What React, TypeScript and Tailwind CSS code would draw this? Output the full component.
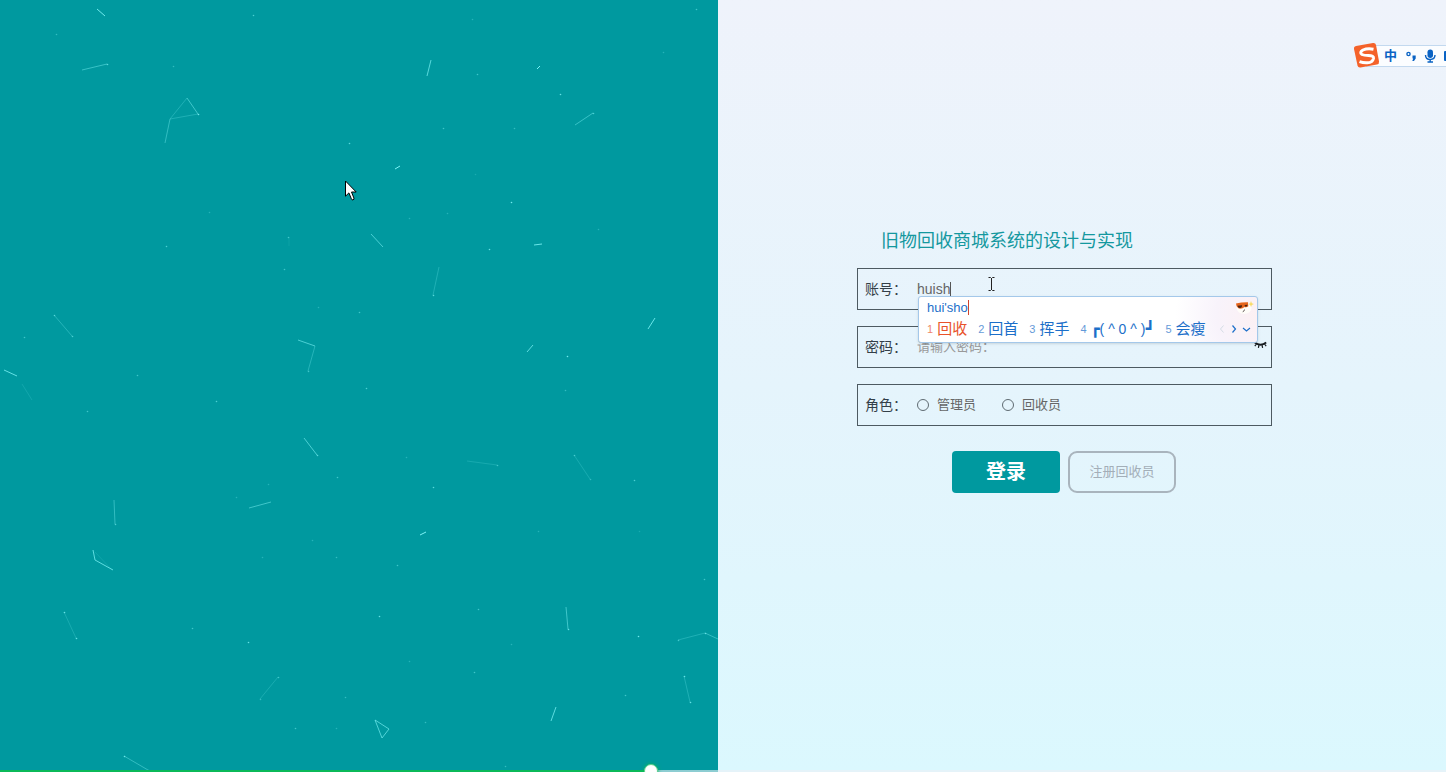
import React, { useState } from "react";

interface LinkLine {
  points: string;
  opacity: number;
}

interface Candidate {
  index: number;
  word: React.ReactNode;
}

const lines: LinkLine[] = [
  { points: "97,9 105,16", opacity: 0.9 },
  { points: "82,70 107,64", opacity: 0.45 },
  { points: "187,98 198,114", opacity: 0.5 },
  { points: "198,114 170,119 187,98", opacity: 0.25 },
  { points: "170,119 165,143", opacity: 0.4 },
  { points: "54,315 72,336", opacity: 0.3 },
  { points: "4,370 17,376", opacity: 0.8 },
  { points: "298,340 315,346", opacity: 0.6 },
  { points: "315,346 308,371", opacity: 0.3 },
  { points: "289,237 289,246", opacity: 0.1 },
  { points: "431,60 427,76", opacity: 0.7 },
  { points: "537,69 540,66", opacity: 1 },
  { points: "575,125 593,113", opacity: 0.45 },
  { points: "395,169 400,166", opacity: 1 },
  { points: "371,234 383,247", opacity: 0.6 },
  { points: "534,245 542,244", opacity: 0.85 },
  { points: "439,267 433,295", opacity: 0.25 },
  { points: "655,318 648,329", opacity: 0.85 },
  { points: "533,345 527,352", opacity: 0.75 },
  { points: "22,384 32,400", opacity: 0.15 },
  { points: "304,438 317,455", opacity: 0.6 },
  { points: "249,508 271,502", opacity: 0.5 },
  { points: "114,500 115,524", opacity: 0.4 },
  { points: "93,550 95,560 113,570", opacity: 0.75 },
  { points: "95,552 112,570", opacity: 0.12 },
  { points: "64,612 76,638", opacity: 0.2 },
  { points: "278,677 260,699", opacity: 0.2 },
  { points: "124,756 148,770", opacity: 0.4 },
  { points: "467,461 497,465", opacity: 0.18 },
  { points: "574,455 590,479", opacity: 0.2 },
  { points: "420,535 426,532", opacity: 1 },
  { points: "566,607 568,629", opacity: 0.5 },
  { points: "678,640 705,633", opacity: 0.25 },
  { points: "705,633 718,639", opacity: 0.4 },
  { points: "684,676 690,702", opacity: 0.25 },
  { points: "375,720 389,729 382,738 375,720", opacity: 0.65 },
  { points: "556,707 551,721", opacity: 0.75 },
];

// x, y, opacity
const dots: [number, number, number][] = [
  [56, 34, 0.4], [253, 15, 0.6], [173, 66, 0.4], [349, 143, 0.7], [166, 246, 0.6],
  [209, 212, 0.3], [288, 237, 0.5], [284, 269, 0.5], [24, 337, 0.5], [137, 375, 0.5],
  [318, 307, 0.3], [359, 312, 0.5], [107, 64, 0.7], [198, 114, 0.9], [472, 19, 0.3],
  [696, 9, 0.5], [663, 52, 0.3], [477, 74, 0.5], [560, 94, 0.8], [593, 113, 0.6],
  [443, 128, 0.5], [514, 128, 0.4], [475, 174, 0.2], [511, 202, 0.9], [489, 249, 0.8],
  [447, 213, 0.3], [409, 218, 0.3], [598, 229, 0.3], [433, 295, 0.7], [567, 356, 0.9],
  [366, 388, 0.6], [565, 390, 0.4], [216, 401, 0.6], [87, 411, 0.5], [72, 336, 0.6],
  [54, 315, 0.6], [308, 371, 0.5], [317, 455, 0.7], [337, 477, 0.5], [268, 484, 0.3],
  [236, 497, 0.3], [115, 524, 0.6], [336, 557, 0.4], [312, 540, 0.3], [262, 557, 0.3],
  [64, 612, 0.8], [76, 638, 0.8], [192, 628, 0.5], [248, 642, 0.8], [278, 677, 0.5],
  [260, 699, 0.4], [345, 697, 0.4], [295, 728, 0.5], [336, 728, 0.3], [124, 756, 0.8],
  [148, 770, 0.8], [406, 457, 0.3], [433, 487, 0.7], [397, 565, 0.5], [497, 465, 0.5],
  [574, 455, 0.5], [590, 479, 0.4], [634, 480, 0.6], [538, 531, 0.3], [639, 531, 0.2],
  [478, 609, 0.5], [379, 616, 0.8], [511, 644, 0.3], [474, 672, 0.5], [568, 629, 0.8],
  [638, 636, 0.9], [704, 579, 0.5], [705, 633, 0.7], [678, 640, 0.5], [684, 676, 0.8],
  [690, 702, 0.8], [625, 695, 0.5], [425, 722, 0.4], [505, 766, 0.4], [409, 661, 0.3],
];

const Emoticon = () => (
  <span className="flex">
    <span className="font-['DejaVu_Sans_Mono',monospace]">┏</span>
    <span className="text-[14px]">( ^ 0 ^ )</span>
    <span className="font-['DejaVu_Sans_Mono',monospace]">┛</span>
  </span>
);

const candidates: Candidate[] = [
  { index: 1, word: "回收" },
  { index: 2, word: "回首" },
  { index: 3, word: "挥手" },
  { index: 4, word: <Emoticon /> },
  { index: 5, word: "会瘦" },
];

const roles = ["管理员", "回收员"];

const ParticleField = () => (
  <svg className="absolute inset-0 h-full w-full" fill="none" stroke="#7df3f6" aria-hidden="true">
    {lines.map((line) => (
      <polyline key={line.points} points={line.points} strokeOpacity={line.opacity} />
    ))}
    {dots.map(([x, y, opacity]) => (
      <circle key={`${x}-${y}`} cx={x + 0.5} cy={y + 0.5} r="0.8" fill="#7df3f6" fillOpacity={opacity} stroke="none" />
    ))}
  </svg>
);

const MousePointer = () => (
  <svg className="absolute left-[345px] top-[180px]" width="12" height="21" viewBox="0 0 12 21" aria-hidden="true">
    <path
      d="M.5 1v15.2l3.4-3.3 2.5 6q.4 1.3 1.6 1 1.5-.5.9-1.9L6.5 12h4.7z"
      fill="#fff"
      stroke="#000"
    />
  </svg>
);

const ClosedEye = () => (
  <svg width="13" height="8" viewBox="0 0 13 8" fill="none" stroke="#171b1f" aria-hidden="true">
    <path d="M.8 1.5Q6.500 6 12.200 1.500" strokeWidth="1.8" />
    <path d="M2.500 3 .8 5.200M5 4l-.6 2.800M8 4l.6 2.800M10.500 3l1.700 2.200" strokeWidth="1.200" />
  </svg>
);

const Mascot = () => (
  <svg width="20" height="16" viewBox="0 0 20 16" aria-hidden="true">
    <ellipse cx="10" cy="9" rx="7.5" ry="6" fill="#fffdf9" />
    <path d="M2 4.500Q8 3 14 3.200l.3 4Q12.500 9 10.500 8 9 9.800 6 9.800 2.500 9 2 4.500z" fill="#e5641c" />
    <path d="M3.500 6.800 8 6.300q.2 2.700-2 2.700-2 0-2.500-2.200zM10.500 6l3-.2q0 1.700-1.500 1.900-1.200 0-1.500-1.700z" fill="#4a2415" />
    <path d="M10.500 10.500q-.2 2-1.800 2.300" fill="none" stroke="#5b5350" strokeWidth=".9" />
    <path d="m17 2 .8 2.200L20 5l-2.200.9L17 8l-.8-2.100L14.500 5l1.700-.8z" fill="#f8dc68" />
  </svg>
);

const InputMethodPanel = () => (
  <div className="absolute left-[60px] top-[27px] z-10 flex h-[47px] w-[340px] flex-col rounded-[3px] border border-[#a4c8ea] bg-white bg-[radial-gradient(circle_at_100%_40%,#fcf0f3_0%,#f8f3fb_12%,#ffffff_24%)] pl-2 pr-[3px] text-[#1c6fc9] shadow-sm">
    <div className="flex h-[20px] items-center justify-between">
      <span className="border-r border-[#d0442e] text-[13px] leading-[15px]">hui'sho</span>
      <Mascot />
    </div>
    <div className="flex h-[24px] items-center">
      <ol className="flex items-center gap-[11px] whitespace-nowrap">
        {candidates.map(({ index, word }) => (
          <li key={index} className={`flex items-center gap-1 ${index === 1 ? "text-[#e8532b]" : ""}`}>
            <span className="text-[11px] opacity-70">{index}</span>
            <span className="text-[15px] leading-[20px]">{word}</span>
          </li>
        ))}
      </ol>
      <div className="ml-auto flex items-center gap-1 pr-[3px]">
        <button type="button" aria-label="上一页" className="text-[#d5dce5]">
          <svg width="8" height="8" viewBox="0 0 8 8" fill="none" stroke="currentColor"><path d="M5.500.5 2.500 4l3 3.500" /></svg>
        </button>
        <button type="button" aria-label="下一页">
          <svg width="8" height="8" viewBox="0 0 8 8" fill="none" stroke="currentColor"><path d="m2.500.5 3 3.500-3 3.500" strokeWidth="1.200" /></svg>
        </button>
        <button type="button" aria-label="展开">
          <svg width="9" height="8" viewBox="0 0 9 8" fill="none" stroke="currentColor"><path d="M1 3l3.500 3L8 3" strokeWidth="1.200" /></svg>
        </button>
      </div>
    </div>
  </div>
);

const InputMethodBar = () => (
  <div className="absolute right-0 top-[42px] flex h-[27px] w-[93px] items-center overflow-hidden">
    <div className="ml-[13px] flex h-[22px] flex-1 items-center border-y border-[#c3d9ef] bg-[#fbfdff] pl-[18px] text-[#0a63c4]">
      <span className="text-[13px] font-bold leading-[20px]">中</span>
      <svg className="ml-2 shrink-0" width="12" height="12" viewBox="0 0 12 12" aria-hidden="true">
        <circle cx="3.5" cy="4" r="1.600" fill="none" stroke="currentColor" strokeWidth="1.400" />
        <path d="M7.500 5.500h3.200v3L9 11H7.300l.9-2.500h-.7z" fill="currentColor" />
      </svg>
      <svg className="ml-[7px] shrink-0" width="12" height="14" viewBox="0 0 12 14" aria-hidden="true">
        <rect x="3.500" y="0.500" width="5.500" height="8.500" rx="2.700" fill="currentColor" />
        <path d="M1.500 6q0 4.500 4.700 4.500T11 6M6.200 10.500V13M3.500 13H9" fill="none" stroke="currentColor" strokeWidth="1.400" />
      </svg>
      <svg className="ml-2 shrink-0" width="14" height="12" viewBox="0 0 14 12" aria-hidden="true">
        <rect x="0" y="1" width="14" height="10" rx="1" fill="currentColor" />
      </svg>
    </div>
    <svg className="absolute left-0 top-0" width="28" height="27" viewBox="0 0 28 27" aria-hidden="true">
      <path d="M3 4 20 1q2.500-.3 3 2l3 16.500q.3 2.500-2 3L7.500 25.500q-2.500.3-3-2L1 7Q.6 4.500 3 4z" fill="#f4622a" />
      <path
        d="M20.500 7.200Q14.500 6 10 8 6 10.500 9 12.500q2 1 6.500 1 5.500 0 5 3-1 4-6 4.300-4 .3-8-1.100"
        fill="none"
        stroke="#fff"
        strokeWidth="3"
      />
    </svg>
  </div>
);

export default function App() {
  const [account, setAccount] = useState("huish");
  const [password, setPassword] = useState("");
  const [role, setRole] = useState("");
  const [progress, setProgress] = useState(45);

  return (
    <main className="relative flex min-h-screen overflow-hidden font-['Liberation_Sans','Noto_Sans_CJK_SC',sans-serif]">
      {/* Particle side */}
      <section className="relative w-[calc(50%-5px)] overflow-hidden bg-[#00999f]">
        <ParticleField />
        <MousePointer />
      </section>

      {/* Login side */}
      <section className="flex-1 bg-linear-to-b from-[#eff3fb] via-[#e5f4fc] to-[#dbf8fe] pl-[139px] pt-[227px]">
        <form className="w-[415px]" onSubmit={(e) => e.preventDefault()}>
          <h1 className="pl-6 text-[18px] leading-[28px] text-[#14989f]">旧物回收商城系统的设计与实现</h1>

          <div className="mt-[13px] flex flex-col gap-4 text-[14px] text-[#333f48]">
            <div className="relative flex h-[42px] items-center border border-[#4d5a61] px-[7px]">
              <label htmlFor="account" className="w-[52px] shrink-0">账号：</label>
              <input
                id="account"
                value={account}
                onChange={(e) => setAccount(e.target.value)}
                className="h-[15px] w-[34px] border-r border-[#555] bg-transparent text-[14px] leading-[15px] text-[#666] outline-none"
              />
              {/* Text caret pointer */}
              <svg className="absolute left-[130px] top-[8px]" width="7" height="14" viewBox="0 0 7 14" fill="none" stroke="#222" aria-hidden="true">
                <path d="M.5.5h2l1 1 1-1h2M3.500 1v12M.5 13.500h2l1-1 1 1h2" />
              </svg>
              <InputMethodPanel />
            </div>

            <div className="relative flex h-[42px] items-center border border-[#4d5a61] px-[7px]">
              <label htmlFor="password" className="w-[52px] shrink-0">密码：</label>
              <input
                id="password"
                type="password"
                value={password}
                placeholder="请输入密码："
                onChange={(e) => setPassword(e.target.value)}
                className="min-w-0 flex-1 bg-transparent text-[13px] text-[#666] outline-none placeholder:text-[#999]"
              />
              <button type="button" aria-label="显示密码" className="absolute right-1 top-[14px]">
                <ClosedEye />
              </button>
            </div>

            <div role="radiogroup" aria-labelledby="role-label" className="flex h-[42px] items-center border border-[#4d5a61] px-[7px]">
              <span id="role-label" className="w-[52px] shrink-0">角色：</span>
              <div className="flex gap-[26px]">
                {roles.map((name) => (
                  <label key={name} className="flex items-center gap-2 text-[13px] text-[#666]">
                    <input
                      type="radio"
                      name="role"
                      checked={role === name}
                      onChange={() => setRole(name)}
                      className="h-3 w-3 appearance-none rounded-full border border-[#5f6b72] checked:bg-[#14989f]"
                    />
                    {name}
                  </label>
                ))}
              </div>
            </div>
          </div>

          <div className="mt-[25px] flex gap-2 pl-[95px]">
            <button type="submit" className="h-[42px] w-[108px] rounded bg-[#00999f] text-[20px] font-bold text-white">
              登录
            </button>
            <button type="button" className="h-[42px] w-[108px] rounded-[9px] border-2 border-[#a9b4bd] text-[13px] text-[#a3aeb8]">
              注册回收员
            </button>
          </div>
        </form>
      </section>

      <InputMethodBar />

      {/* Playback progress */}
      <input
        type="range"
        aria-label="播放进度"
        min={0}
        max={100}
        value={progress}
        onChange={(e) => setProgress(Number(e.target.value))}
        style={{ backgroundImage: `linear-gradient(to right, #0bb959 ${progress}%, rgba(235,240,245,0.6) ${progress}%)` }}
        className="fixed bottom-0 left-0 h-[2px] w-full appearance-none [&::-webkit-slider-thumb]:h-[14px] [&::-webkit-slider-thumb]:w-[14px] [&::-webkit-slider-thumb]:appearance-none [&::-webkit-slider-thumb]:rounded-full [&::-webkit-slider-thumb]:border [&::-webkit-slider-thumb]:border-[#5fd08e] [&::-webkit-slider-thumb]:bg-white [&::-webkit-slider-thumb]:shadow-[0_0_4px_#0bb959]"
      />
    </main>
  );
}
